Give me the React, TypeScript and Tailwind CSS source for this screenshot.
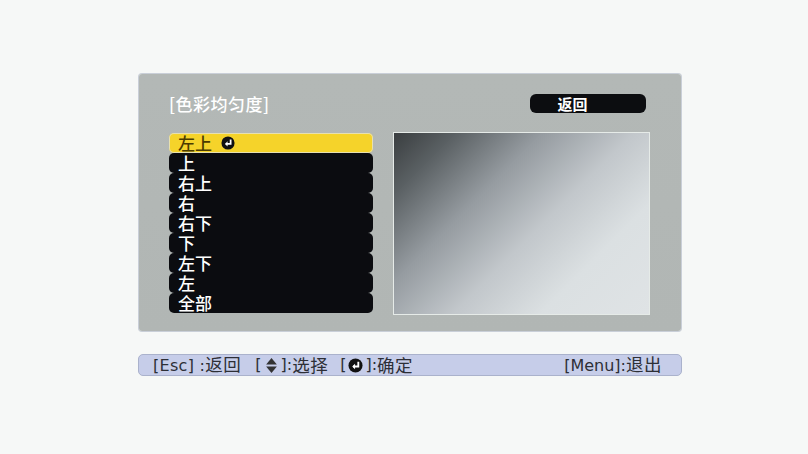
import React from "react";

const cjk = { fontFamily: '"Noto Sans CJK SC", "Noto Sans", sans-serif' };
const foot = { fontFamily: '"DejaVu Sans", "Noto Sans CJK SC", sans-serif' };

function EnterIcon({ size = 14, cls = "" }: { size?: number; cls?: string }) {
  return (
    <svg width={size} height={size} viewBox="0 0 16 16" className={"inline-block " + cls}>
      <circle cx="8" cy="8" r="7.5" fill="#111" />
      <path d="M11 4 V9 H5.5" stroke="#fff" strokeWidth="2" fill="none" />
      <path d="M7.5 6 L4.5 9 L7.5 12 Z" fill="#fff" />
    </svg>
  );
}

function UpDown() {
  return (
    <svg width="13" height="15" viewBox="0 0 10 14" className="inline-block mx-[3px]">
      <path d="M5 0 L10 6 H0 Z" fill="#333" />
      <path d="M5 14 L10 8 H0 Z" fill="#333" />
    </svg>
  );
}

function C({ children }: { children: React.ReactNode }) {
  return <span className="text-[17.5px] tracking-[0.5px]" style={cjk}>{children}</span>;
}

const items = ["上", "右上", "右", "右下", "下", "左下", "左", "全部"];

export default function App() {
  return (
    <div className="w-[808px] h-[454px] bg-[#f6f8f7] relative overflow-hidden" style={cjk}>
      <div className="pt-[74px] pl-[139px]">
        <div className="w-[542px] h-[257px] rounded-[3px] bg-gradient-to-b from-[#b3b8b6] to-[#b1b6b4] shadow-[0_0_0_1px_#c9cfd8] flex flex-col">
          <div className="flex items-center justify-between pl-[30px] pr-[35px] pt-[19px] h-[40px]">
            <div className="text-white text-[17px] leading-[18px] font-medium tracking-[0.5px]">[色彩均匀度]</div>
            <div className="w-[116px] h-[19px] rounded-[6px] bg-[#0c0d10] text-white text-[15px] leading-[19px] text-center pr-[33px] pl-[2px] font-bold">
              返回
            </div>
          </div>
          <div className="flex pl-[30px] pt-[19px] gap-[20px]">
            <div className="w-[204px] flex flex-col">
              <div className="h-[20px] rounded-[5px] bg-[#f5d32a] shadow-[inset_0_0_0_1px_#e7e0b0] flex items-center pl-[9px] gap-[9px] text-[#4a3b00] text-[17px] leading-[20px] font-medium">
                <span>左上</span>
                <EnterIcon size={14} />
              </div>
              {items.map((t) => (
                <div key={t} className="h-[20px] rounded-[5px] bg-[#0b0c10] pl-[9px] text-white text-[17px] leading-[20px] font-medium">
                  {t}
                </div>
              ))}
            </div>
            <div className="w-[257px] h-[183px] mt-[-1px] border border-[#e6ebe8] bg-[linear-gradient(135deg,#3a3e40_0%,#5a6063_14%,#959ba0_34%,#c2c7cb_55%,#dbe0e2_75%,#dfe3e5_100%)]" />
          </div>
        </div>
      </div>
      <div style={foot} className="ml-[138px] mt-[23px] w-[544px] h-[22px] rounded-[5px] bg-[#c6cde9] border border-[#aab2cc] flex items-center justify-between pl-[14px] pr-[19px] text-[#2d2f36] text-[16px] leading-[20px]">
        <div className="flex items-center">
          <span className="tracking-[0.3px]">[Esc] :<C>返回</C></span>
          <span className="ml-[14px] flex items-center">[<UpDown />]:<C>选择</C></span>
          <span className="ml-[12px] flex items-center">[<EnterIcon size={15} cls="mx-[2px]" />]:<C>确定</C></span>
        </div>
        <span>[Menu]:<C>退出</C></span>
      </div>
    </div>
  );
}
